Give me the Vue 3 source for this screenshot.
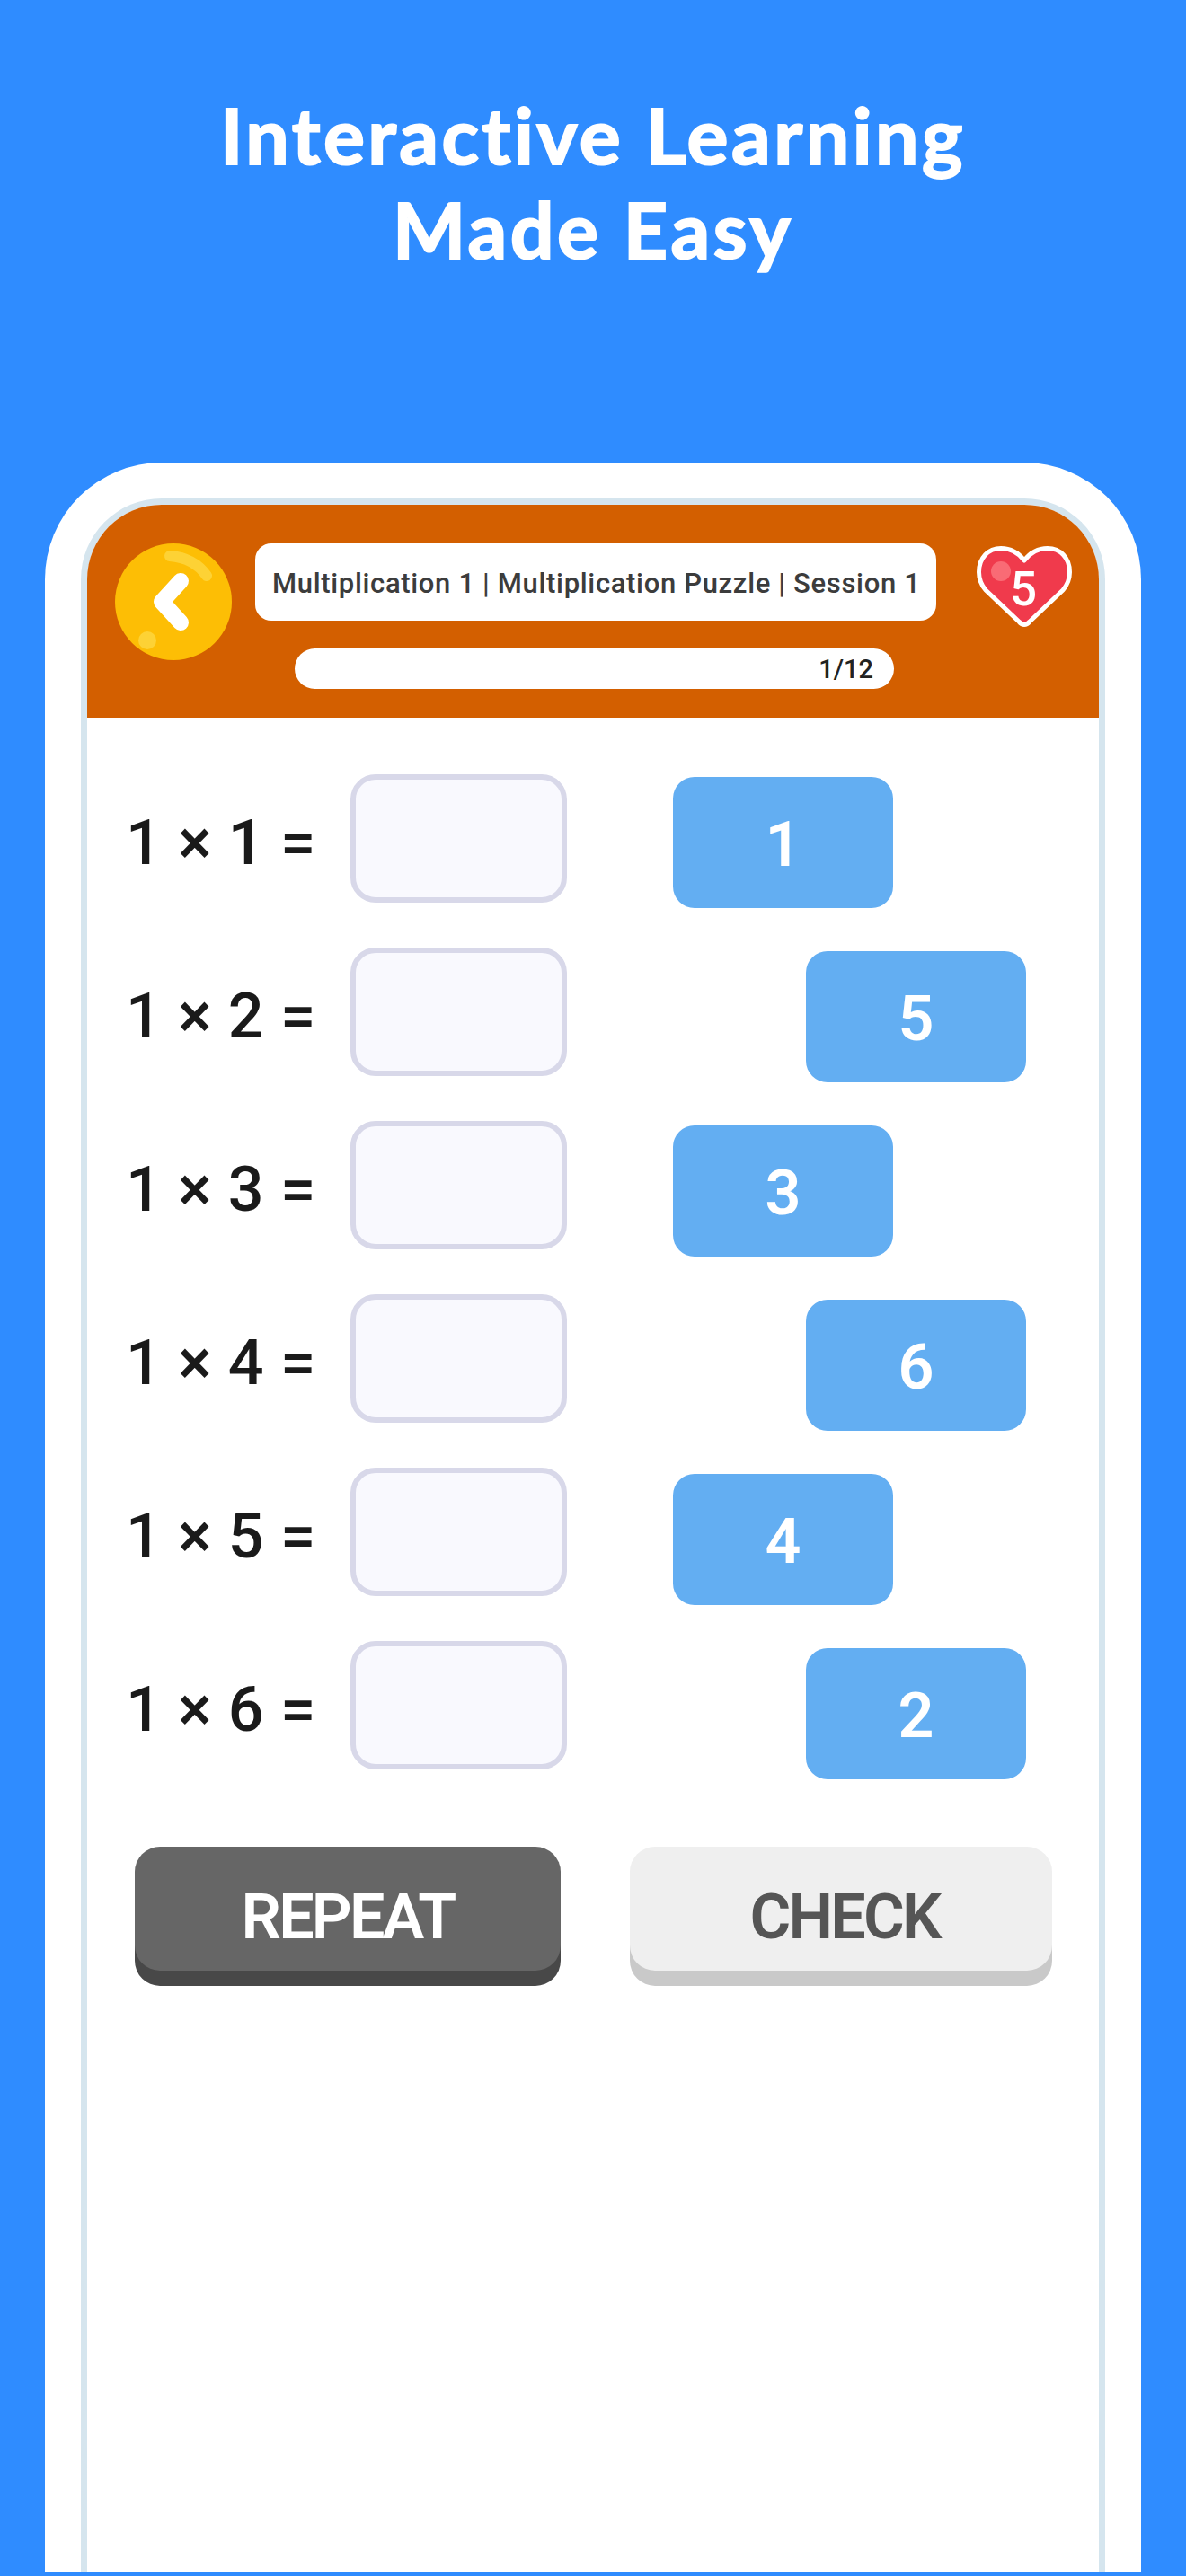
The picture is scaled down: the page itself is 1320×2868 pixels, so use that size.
<script setup>
const equations = ['1 × 1 =', '1 × 2 =', '1 × 3 =', '1 × 4 =', '1 × 5 =', '1 × 6 =']
const tiles = [
  { n: 1, side: 'left' },
  { n: 5, side: 'right' },
  { n: 3, side: 'left' },
  { n: 6, side: 'right' },
  { n: 4, side: 'left' },
  { n: 2, side: 'right' }
]
</script>

<template>
  <div class="page">
    <h1 class="hero">Interactive Learning<br />Made Easy</h1>
    <div class="frame">
      <div class="screen">
        <header class="top">
          <svg class="back" viewBox="0 0 130 130" aria-label="Back">
            <circle cx="65" cy="65" r="65" fill="#fdbe05" />
            <path d="M61 14 Q88 16 102 36" fill="none" stroke="#fdd235" stroke-width="12" stroke-linecap="round" />
            <circle cx="36" cy="108" r="10" fill="#fdd235" />
            <path d="M73 42 L52 65 L73 88" fill="none" stroke="#fff" stroke-width="18" stroke-linecap="round" stroke-linejoin="round" />
          </svg>
          <div class="mid">
            <div class="title">Multiplication 1 | Multiplication Puzzle | Session 1</div>
            <div class="progress">1/12</div>
          </div>
          <div class="heart">
            <svg viewBox="0 0 106 91" class="heart-svg">
              <path d="M47 84 L10 49 C5 43 2.5 36 2.5 29 C2.5 13 13 2.5 27 2.5 C38 2.5 47 8 53 16 C59 8 68 2.5 79 2.5 C93 2.5 103.5 13 103.5 29 C103.5 36 101 43 96 49 L59 84 Q53 91 47 84 Z" fill="#f03a4c" stroke="#fff" stroke-width="5" stroke-linejoin="round" />
              <circle cx="27" cy="28" r="11" fill="#f96b75" />
            </svg>
            <span class="lives">5</span>
          </div>
        </header>
        <main class="board">
          <div class="equations">
            <div v-for="eq in equations" :key="eq" class="row">
              <span class="eq">{{ eq }}</span>
              <span class="slot"></span>
            </div>
          </div>
          <div class="tiles">
            <div v-for="t in tiles" :key="t.n" class="tile" :class="t.side">{{ t.n }}</div>
          </div>
        </main>
        <div class="actions">
          <button class="btn repeat">REPEAT</button>
          <button class="btn check">CHECK</button>
        </div>
      </div>
    </div>
  </div>
</template>

<style>
html, body { margin: 0; background: #2f8cff; }
</style>

<style scoped>
.page {
  width: 1320px;
  height: 2868px;
  box-sizing: border-box;
  background: #2f8cff;
  padding-bottom: 4px;
  display: flex;
  flex-direction: column;
  overflow: hidden;
  font-family: Roboto, "Liberation Sans", sans-serif;
}
.hero {
  margin: 0;
  height: 515px;
  box-sizing: border-box;
  padding-top: 97px;
  text-align: center;
  color: #fff;
  -webkit-text-stroke: 2px #fff;
  font-family: Lato, Roboto, sans-serif;
  font-weight: 700;
  font-size: 86px;
  line-height: 105px;
  letter-spacing: 3.5px;
}
.frame {
  flex: 1;
  margin: 0 50px;
  padding: 40px 40px 0;
  background: #fff;
  border-radius: 130px 130px 0 0;
  display: flex;
}
.screen {
  flex: 1;
  border: 7px solid #d5e5ee;
  border-bottom: 0;
  border-radius: 90px 90px 0 0;
  overflow: hidden;
  background: #fff;
}
.top {
  height: 237px;
  background: #d35f00;
  display: flex;
  align-items: flex-start;
  padding: 43px 0 0 31px;
  box-sizing: border-box;
}
.back {
  width: 130px;
  height: 130px;
  flex: none;
}
.mid {
  margin-left: 26px;
  width: 758px;
  flex: none;
}
.title {
  height: 86px;
  background: #fff;
  border-radius: 18px;
  box-sizing: border-box;
  padding: 27px 0 0 19px;
  color: #3c3c3c;
  font-size: 31px;
  font-weight: 500;
  line-height: 36px;
  letter-spacing: 0.67px;
  white-space: nowrap;
}
.progress {
  margin: 31px 0 0 44px;
  width: 667px;
  height: 45px;
  border-radius: 23px;
  background: #fff;
  box-sizing: border-box;
  padding-right: 23px;
  text-align: right;
  color: #222;
  font-size: 29px;
  font-weight: 500;
  line-height: 46px;
}
.heart {
  position: relative;
  width: 106px;
  height: 91px;
  margin: 3px 0 0 45px;
  flex: none;
}
.heart-svg {
  display: block;
  width: 106px;
  height: 91px;
}
.lives {
  position: absolute;
  left: 0;
  right: 2px;
  top: 18px;
  text-align: center;
  color: #fff;
  font-size: 53px;
  font-weight: 500;
  line-height: 60px;
}
.board {
  display: flex;
  padding: 63px 0 0 43px;
}
.equations {
  display: flex;
  flex-direction: column;
  gap: 50px;
  width: 491px;
  flex: none;
}
.row {
  display: flex;
  align-items: center;
  height: 143px;
}
.eq {
  width: 250px;
  flex: none;
  box-sizing: border-box;
  padding-top: 8px;
  color: #1a1a1a;
  font-size: 70px;
  font-weight: 500;
  word-spacing: 1px;
  white-space: nowrap;
}
.slot {
  width: 244px;
  height: 143px;
  box-sizing: border-box;
  background: #f9f9fe;
  border: 6px solid #d8d8e9;
  border-radius: 28px;
}
.tiles {
  margin: 3px 0 0 118px;
  width: 393px;
  display: flex;
  flex-direction: column;
  gap: 48px;
}
.tile {
  width: 245px;
  height: 146px;
  box-sizing: border-box;
  padding-top: 4px;
  border-radius: 24px;
  background: #63aef2;
  color: #fff;
  font-size: 70px;
  font-weight: 600;
  display: flex;
  align-items: center;
  justify-content: center;
}
.tile.left { align-self: flex-start; }
.tile.right { align-self: flex-end; }
.actions {
  display: flex;
  padding: 75px 0 0 53px;
  gap: 77px;
}
.btn {
  height: 138px;
  box-sizing: border-box;
  border: 0;
  border-radius: 28px;
  font-family: inherit;
  font-size: 70px;
  font-weight: 600;
  letter-spacing: -2.8px;
  padding: 18px 0 0;
}
.repeat {
  width: 474px;
  background: #666;
  color: #fff;
  box-shadow: 0 17px 0 #484848;
}
.check {
  width: 470px;
  padding-left: 8px;
  background: #efefef;
  color: #555;
  box-shadow: 0 17px 0 #c9c9c9;
}
</style>
